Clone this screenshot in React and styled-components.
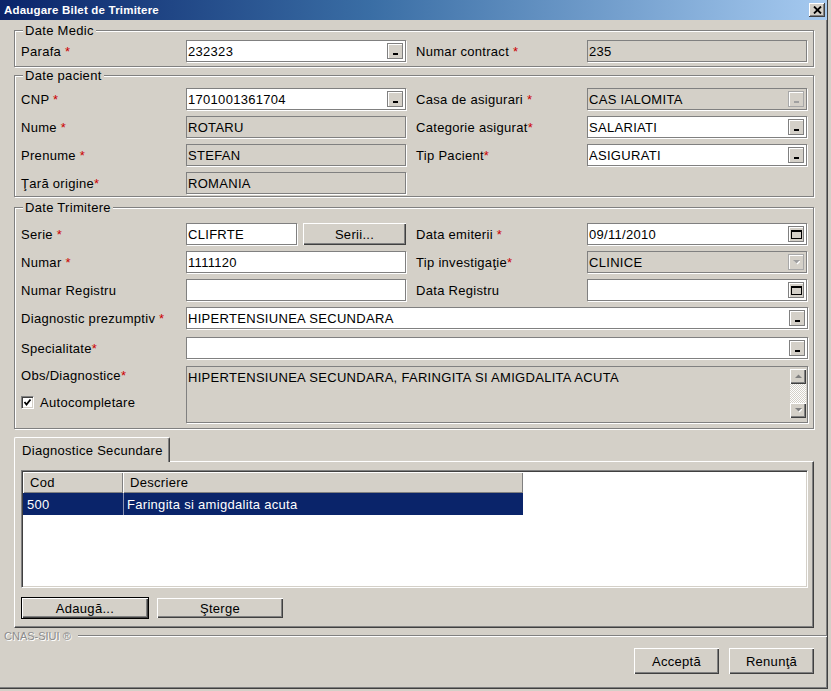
import React from 'react';
import styled, { createGlobalStyle, css } from 'styled-components';

const GlobalStyle = createGlobalStyle`
  html, body { margin: 0; padding: 0; background: #d4d0c8; }
  body { font-family: "Liberation Sans", Arial, sans-serif; font-size: 13px; letter-spacing: 0.3px; color: #000; }
  * { box-sizing: border-box; }
`;

const Window = styled.div`
  width: 831px;
  height: 691px;
  background: #d4d0c8;
  padding: 0 3px 2px 0;
  overflow: hidden;
`;

const Frame = styled.div`
  height: 100%;
  display: flex;
  flex-direction: column;
  border-right: 1px solid #404040;
  border-bottom: 1px solid #404040;
  box-shadow: inset -1px -1px 0 #808080;
`;

const TitleBar = styled.div`
  height: 20px;
  flex: none;
  display: flex;
  align-items: center;
  padding: 0 2px 0 4px;
  background: linear-gradient(90deg, #0a246a 0%, #3a6ea5 45%, #a6caf0 100%);
  color: #fff;
  font-weight: bold;
  font-size: 11.5px;
  letter-spacing: 0.2px;
`;

const CloseButton = styled.div`
  margin-left: auto;
  width: 16px;
  height: 14px;
  background: #d4d0c8;
  box-shadow: inset -1px -1px 0 #404040, inset 1px 1px 0 #fff, inset -2px -2px 0 #808080;
  display: flex;
  align-items: center;
  justify-content: center;
`;

const Body = styled.div`
  display: flex;
  flex-direction: column;
  padding: 0 13px 0 14px;
`;

const Group = styled.fieldset`
  margin: ${p => p.$mt}px 0 0 0;
  padding: ${p => p.$pt}px 5px ${p => p.$pb}px 6px;
  border: 1px solid #808080;
  box-shadow: inset 1px 1px 0 #fff, 1px 1px 0 #fff;
  min-inline-size: 0;
`;

const Legend = styled.legend`
  padding: 0 2px;
  margin-left: 2px;
  line-height: 15px;
  font-size: 13px;
  background: #d4d0c8;
`;

const Row = styled.div`
  display: flex;
  align-items: ${p => (p.$top ? 'flex-start' : 'center')};
  min-height: 22px;
  margin-top: ${p => p.$mt ?? 6}px;
`;

const Label = styled.div`
  flex: none;
  width: ${p => p.$w}px;
  margin-left: ${p => p.$ml || 0}px;
  white-space: nowrap;
  line-height: 15px;
`;

const Req = styled.span`
  color: #cc0000;
`;

const Field = styled.div`
  flex: ${p => (p.$w ? 'none' : 1)};
  width: ${p => (p.$w ? `${p.$w}px` : 'auto')};
  height: ${p => p.$h || 22}px;
  display: flex;
  align-items: ${p => (p.$h ? 'stretch' : 'center')};
  background: ${p => (p.$disabled ? '#d4d0c8' : '#fff')};
  border: 1px solid #808080;
  box-shadow: 1px 1px 0 #fff;
  padding-left: 1px;
`;

const Value = styled.span`
  flex: 1;
  white-space: nowrap;
  overflow: hidden;
  padding-top: ${p => p.$pt || 0}px;
`;

const FieldBtn = styled.span`
  flex: none;
  width: 16px;
  height: 16px;
  margin-right: 2px;
  background: #d4d0c8;
  border: 1px solid ${p => (p.$disabled ? '#a8a8a8' : '#808080')};
  box-shadow: inset 1px 1px 0 #fff;
  display: flex;
  align-items: ${p => (p.$dash ? 'flex-end' : 'center')};
  justify-content: center;
`;

const Dash = styled.span`
  width: 5px;
  height: 2px;
  margin-bottom: 3px;
  background: ${p => (p.$disabled ? '#a0a0a0' : '#000')};
`;

const Btn = styled.button`
  flex: none;
  width: ${p => p.$w}px;
  height: ${p => p.$h || 22}px;
  margin-left: ${p => p.$ml || 0}px;
  padding: 0;
  font: inherit;
  letter-spacing: inherit;
  color: #000;
  background: #d4d0c8;
  border: 1px solid transparent;
  box-shadow: inset 1px 1px 0 #fff, inset -1px -1px 0 #404040, inset -2px -2px 0 #808080;
  ${p => p.$default && css`
    border-color: #000;
  `}
  ${p => p.$flat && css`
    border: none;
  `}
`;

const LabelCol = styled.div`
  flex: none;
  width: 165px;
  display: flex;
  flex-direction: column;
  padding-top: 2px;
`;

const CheckRow = styled.div`
  display: flex;
  align-items: center;
  gap: 6px;
  margin-top: 12px;
`;

const CheckBox = styled.span`
  width: 13px;
  height: 13px;
  background: #fff;
  border: 1px solid;
  border-color: #808080 #fff #fff #808080;
  box-shadow: inset 1px 1px 0 #404040, inset -1px -1px 0 #d4d0c8;
  display: flex;
  align-items: center;
  justify-content: center;
`;

const ScrollBar = styled.div`
  flex: none;
  width: 16px;
  margin: 2px 1px 4px 0;
  display: flex;
  flex-direction: column;
`;

const ScrollBtn = styled.div`
  height: 15px;
  flex: none;
  background: #d4d0c8;
  box-shadow: inset 1px 1px 0 #fff, inset -1px -1px 0 #404040, inset -2px -2px 0 #808080;
  display: flex;
  align-items: center;
  justify-content: center;
`;

const Track = styled.div`
  flex: 1;
  background: repeating-conic-gradient(#fff 0 25%, #d4d0c8 0 50%) 0 0 / 2px 2px;
`;

const TabStrip = styled.div`
  display: flex;
  margin-top: 8px;
  height: 24px;
`;

const Tab = styled.div`
  position: relative;
  z-index: 1;
  height: 25px;
  padding: 0 6px 0 7px;
  display: flex;
  align-items: center;
  background: #d4d0c8;
  border-top: 1px solid #fff;
  border-left: 1px solid #fff;
  border-right: 1px solid #404040;
  box-shadow: inset -1px 0 0 #808080;
  border-radius: 2px 2px 0 0;
`;

const Panel = styled.div`
  border-top: 1px solid #fff;
  border-left: 1px solid #fff;
  border-right: 1px solid #404040;
  border-bottom: 1px solid #404040;
  box-shadow: inset -1px -1px 0 #808080;
  padding: 8px 5px 8px 6px;
`;

const List = styled.div`
  height: 118px;
  background: #fff;
  border: 1px solid;
  border-color: #808080 #fff #fff #808080;
  box-shadow: inset 1px 1px 0 #404040, inset -1px -1px 0 #d4d0c8;
  padding: 1px;
`;

const ListRow = styled.div`
  display: flex;
  width: 500px;
  height: ${p => (p.$header ? 21 : 22)}px;
  background: ${p => (p.$header ? '#d4d0c8' : p.$selected ? '#0a246a' : '#fff')};
  color: ${p => (p.$selected ? '#fff' : '#000')};
`;

const Cell = styled.div`
  width: ${p => p.$w}px;
  display: flex;
  align-items: center;
  padding-left: ${p => (p.$header ? 7 : 4)}px;
  ${p => p.$header && css`
    box-shadow: inset 1px 1px 0 #fff, inset -1px -1px 0 #808080;
  `}
  ${p => p.$sep && css`
    border-left: 1px solid #8a93b4;
    padding-left: 3px;
  `}
`;

const ButtonRow = styled.div`
  display: flex;
  gap: 7px;
  margin-top: 9px;
`;

const FooterRule = styled.div`
  display: flex;
  align-items: center;
  gap: 7px;
  height: 14px;
  padding-left: 4px;
  margin-top: 1px;
`;

const Brand = styled.span`
  font-size: 11px;
  letter-spacing: 0;
  color: #8c8c8c;
  text-shadow: 1px 1px 0 #fff;
`;

const Rule = styled.span`
  flex: 1;
  height: 2px;
  border-top: 1px solid #808080;
  border-bottom: 1px solid #fff;
`;

const Actions = styled.div`
  display: flex;
  justify-content: flex-end;
  gap: 8px;
  padding-right: 12px;
  margin-top: 4px;
`;

const CloseIcon = () => (
  <svg width="9" height="8" viewBox="0 0 9 8">
    <path d="M1 0.5 L8 7.5 M8 0.5 L1 7.5" stroke="#000" strokeWidth="1.8" />
  </svg>
);

const CalendarIcon = () => (
  <svg width="11" height="9" viewBox="0 0 11 9">
    <rect x="0.5" y="0.5" width="10" height="8" fill="none" stroke="#000" />
    <rect x="0" y="0" width="11" height="2" fill="#000" />
  </svg>
);

const Arrow = ({ up, color = '#808080' }) => (
  <svg width="7" height="5" viewBox="0 0 7 5">
    {!up && <polygon points="1,1 8,1 4.5,4.5" fill="#fff" />}
    <polygon points={up ? '0,4 7,4 3.5,0.5' : '0,0 7,0 3.5,3.5'} fill={color} />
  </svg>
);

const CheckMark = () => (
  <svg width="9" height="9" viewBox="0 0 9 9">
    <polyline points="1.5,4 3.5,6.5 7.5,1.5" fill="none" stroke="#000" strokeWidth="1.8" />
  </svg>
);

const Lbl = ({ text, star, w = 165, ml, space = true }) => (
  <Label $w={w} $ml={ml}>
    {text}
    {star && <Req>{space ? ' *' : '*'}</Req>}
  </Label>
);

const Lookup = ({ disabled }) => (
  <FieldBtn $dash $disabled={disabled}>
    <Dash $disabled={disabled} />
  </FieldBtn>
);

const Calendar = () => (
  <FieldBtn>
    <CalendarIcon />
  </FieldBtn>
);

export default function App() {
  return (
    <Window>
      <GlobalStyle />
      <Frame>
        <TitleBar>
          Adaugare Bilet de Trimitere
          <CloseButton><CloseIcon /></CloseButton>
        </TitleBar>
        <Body>
          <Group $mt={3} $pt={2} $pb={4}>
            <Legend>Date Medic</Legend>
            <Row $mt={0}>
              <Lbl text="Parafa" star />
              <Field $w={220}><Value>232323</Value><Lookup /></Field>
              <Lbl text="Numar contract" star w={171} ml={10} />
              <Field $w={220} $disabled><Value>235</Value></Field>
            </Row>
          </Group>

          <Group $mt={1} $pt={5} $pb={2}>
            <Legend>Date pacient</Legend>
            <Row $mt={0}>
              <Lbl text="CNP" star />
              <Field $w={220}><Value>1701001361704</Value><Lookup /></Field>
              <Lbl text="Casa de asigurari" star w={171} ml={10} />
              <Field $w={220} $disabled><Value>CAS IALOMITA</Value><Lookup disabled /></Field>
            </Row>
            <Row>
              <Lbl text="Nume" star />
              <Field $w={220} $disabled><Value>ROTARU</Value></Field>
              <Lbl text="Categorie asigurat" star space={false} w={171} ml={10} />
              <Field $w={220}><Value>SALARIATI</Value><Lookup /></Field>
            </Row>
            <Row>
              <Lbl text="Prenume" star />
              <Field $w={220} $disabled><Value>STEFAN</Value></Field>
              <Lbl text="Tip Pacient" star space={false} w={171} ml={10} />
              <Field $w={220}><Value>ASIGURATI</Value><Lookup /></Field>
            </Row>
            <Row>
              <Lbl text="Ţară origine" star space={false} />
              <Field $w={220} $disabled><Value>ROMANIA</Value></Field>
            </Row>
          </Group>

          <Group $mt={3} $pt={8} $pb={5}>
            <Legend>Date Trimitere</Legend>
            <Row $mt={0}>
              <Lbl text="Serie" star />
              <Field $w={111}><Value>CLIFRTE</Value></Field>
              <Btn $w={103} $ml={6} $flat>Serii...</Btn>
              <Lbl text="Data emiterii" star w={171} ml={10} />
              <Field $w={220}><Value>09/11/2010</Value><Calendar /></Field>
            </Row>
            <Row>
              <Lbl text="Numar" star />
              <Field $w={220}><Value>1111120</Value></Field>
              <Lbl text="Tip investigaţie" star space={false} w={171} ml={10} />
              <Field $w={220} $disabled>
                <Value>CLINICE</Value>
                <FieldBtn $disabled><Arrow color="#a0a0a0" /></FieldBtn>
              </Field>
            </Row>
            <Row>
              <Lbl text="Numar Registru" />
              <Field $w={220}><Value /></Field>
              <Lbl text="Data Registru" w={171} ml={10} />
              <Field $w={220}><Value /><Calendar /></Field>
            </Row>
            <Row>
              <Lbl text="Diagnostic prezumptiv" star />
              <Field><Value>HIPERTENSIUNEA SECUNDARA</Value><Lookup /></Field>
            </Row>
            <Row $mt={8}>
              <Lbl text="Specialitate" star space={false} />
              <Field><Value /><Lookup /></Field>
            </Row>
            <Row $mt={7} $top>
              <LabelCol>
                <Label>Obs/Diagnostice<Req>*</Req></Label>
                <CheckRow>
                  <CheckBox><CheckMark /></CheckBox>
                  Autocompletare
                </CheckRow>
              </LabelCol>
              <Field $h={57} $disabled>
                <Value $pt={3}>HIPERTENSIUNEA SECUNDARA, FARINGITA SI AMIGDALITA ACUTA</Value>
                <ScrollBar>
                  <ScrollBtn><Arrow up /></ScrollBtn>
                  <Track />
                  <ScrollBtn><Arrow /></ScrollBtn>
                </ScrollBar>
              </Field>
            </Row>
          </Group>

          <TabStrip>
            <Tab>Diagnostice Secundare</Tab>
          </TabStrip>
          <Panel>
            <List>
              <ListRow $header>
                <Cell $w={100} $header>Cod</Cell>
                <Cell $w={400} $header>Descriere</Cell>
              </ListRow>
              <ListRow $selected>
                <Cell $w={100}>500</Cell>
                <Cell $w={400} $sep>Faringita si amigdalita acuta</Cell>
              </ListRow>
            </List>
            <ButtonRow>
              <Btn $w={128} $default>Adaugă...</Btn>
              <Btn $w={128}>Şterge</Btn>
            </ButtonRow>
          </Panel>
        </Body>
        <FooterRule>
          <Brand>CNAS-SIUI ®</Brand>
          <Rule />
        </FooterRule>
        <Actions>
          <Btn $w={87} $h={28}>Acceptă</Btn>
          <Btn $w={87} $h={28}>Renunţă</Btn>
        </Actions>
      </Frame>
    </Window>
  );
}
